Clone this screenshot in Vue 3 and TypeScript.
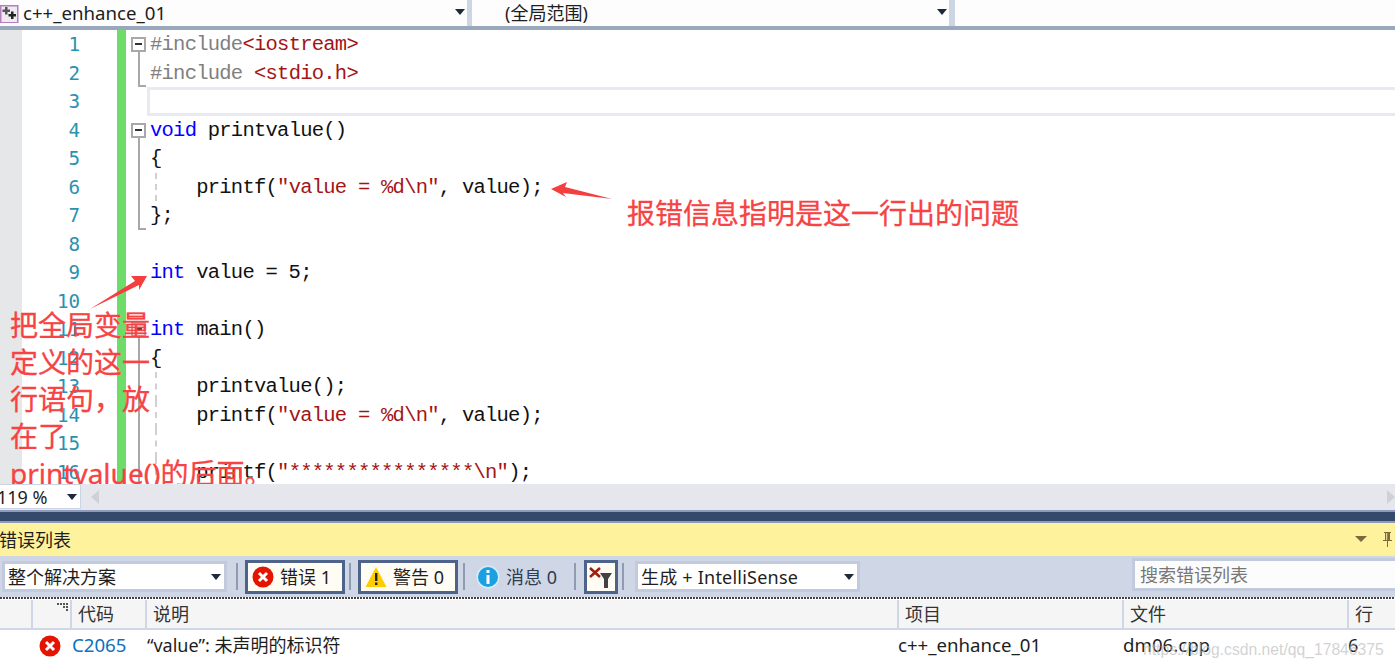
<script setup lang="ts">
type Tok = { t: string; c?: string }
type Line = { toks: Tok[]; fold?: 'box' | 'line' | 'end'; guide?: boolean; current?: boolean }

const s = (t: string): Tok => ({ t, c: 'str' })
const k = (t: string): Tok => ({ t, c: 'kw' })
const p = (t: string): Tok => ({ t, c: 'pp' })
const n = (t: string): Tok => ({ t })

const lines: Line[] = [
  { toks: [p('#include'), s('<iostream>')], fold: 'box' },
  { toks: [p('#include'), n(' '), s('<stdio.h>')], fold: 'end' },
  { toks: [], current: true },
  { toks: [k('void'), n(' printvalue()')], fold: 'box' },
  { toks: [n('{')], fold: 'line' },
  { toks: [n('    printf('), s('"value = %d\\n"'), n(', value);')], fold: 'line', guide: true },
  { toks: [n('};')], fold: 'end' },
  { toks: [] },
  { toks: [k('int'), n(' value = 5;')] },
  { toks: [] },
  { toks: [k('int'), n(' main()')], fold: 'box' },
  { toks: [n('{')], fold: 'line' },
  { toks: [n('    printvalue();')], fold: 'line', guide: true },
  { toks: [n('    printf('), s('"value = %d\\n"'), n(', value);')], fold: 'line', guide: true },
  { toks: [], fold: 'line', guide: true },
  { toks: [n('    printf('), s('"****************\\n"'), n(');')], fold: 'line', guide: true },
]

const noteLines: string[] = ['把全局变量', '定义的这一', '行语句，放', '在了', 'printvalue()的后面。']
const columns: string[] = ['', '', '代码', '说明', '项目', '文件', '行']
</script>

<template>
  <div class="page">
    <div class="navbar">
      <div class="nav-combo first">
        <svg class="proj" width="19" height="19" viewBox="0 0 19 19">
          <rect x="0.750" y="1.750" width="17" height="17" fill="#eeeaf0" stroke="#b67fc0" stroke-width="1.500" />
          <path d="M5 3v2.500H2.500v2.500H5v2.500h2.500V8H10V5.500H7.500V3z" fill="#555" />
          <path d="M11 7.500V10H8.500v2.500H11V15h2.500v-2.500H16V10h-2.500V7.500z" fill="#222" />
        </svg>
        <span class="nav-text latin">c++_enhance_01</span>
        <i class="caret nav-caret"></i>
      </div>
      <div class="nav-combo second">
        <span class="nav-text scope">(全局范围)</span>
        <i class="caret nav-caret"></i>
      </div>
      <div class="nav-combo third"></div>
    </div>

    <div class="editor">
      <div v-for="(line, i) in lines" :key="i" class="row">
        <div class="gutter"></div>
        <div class="num">{{ i + 1 }}</div>
        <div class="green"></div>
        <div class="fold" :class="line.fold">
          <i v-if="line.fold === 'box'" class="fold-box"></i>
        </div>
        <div class="code" :class="{ current: line.current, guide: line.guide }">
          <span v-for="(tok, j) in line.toks" :key="j" :class="tok.c">{{ tok.t }}</span>
        </div>
      </div>

      <svg class="arrows" width="700" height="340" viewBox="0 0 700 340">
        <polygon points="551,159 567,152 565,157 612,169 563,163 566,167" fill="#f53e3e" />
        <polygon points="147,246 131,246 135,251 90,279 139,255 139,260" fill="#f53e3e" />
      </svg>
      <div class="note note-right">报错信息指明是这一行出的问题</div>
      <div class="note note-left">
        <div v-for="t in noteLines" :key="t" class="note-line">{{ t }}</div>
      </div>
    </div>

    <div class="hscroll">
      <div class="zoom-combo"><span>119 %</span><i class="caret"></i></div>
      <i class="tri-left"></i>
      <i class="tri-right"></i>
    </div>

    <div class="splitter"></div>

    <div class="title">
      <span class="title-text">错误列表</span>
      <i class="title-caret"></i>
      <svg class="pin" width="11" height="16" viewBox="0 0 11 16">
        <path d="M2 1h7v1H8v7h2v1H1V9h2V2H2zM4.200 2v7h1V2zM5 10h1v6H5z" fill="#7a6a3f" />
      </svg>
    </div>

    <div class="toolbar">
      <div class="combo scope-combo"><span>整个解决方案</span><i class="caret"></i></div>
      <i class="sep sep-a"></i>
      <div class="btn err">
        <svg width="22" height="22" viewBox="0 0 22 22">
          <circle cx="11" cy="11" r="10.500" fill="#e51400" />
          <path d="M7 7l8 8M15 7l-8 8" stroke="#fff" stroke-width="3" />
        </svg>
        <span>错误 1</span>
      </div>
      <i class="sep sep-b"></i>
      <div class="btn warn">
        <svg width="22" height="22" viewBox="0 0 22 22">
          <path d="M11 1L21.500 21H0.500z" fill="#fc0" />
          <path d="M10 7h2.400v8H10zM10 16.500h2.400V19H10z" fill="#222" />
        </svg>
        <span>警告 0</span>
      </div>
      <i class="sep sep-c"></i>
      <div class="info">
        <svg width="24" height="24" viewBox="0 0 24 24">
          <circle cx="12" cy="12" r="11.500" fill="#d6edf8" />
          <circle cx="12" cy="12" r="10" fill="#1ba1e2" />
          <path d="M10.500 5h3v3h-3zM10.500 10h3v9h-3z" fill="#fff" />
        </svg>
        <span>消息 0</span>
      </div>
      <i class="sep sep-d"></i>
      <div class="filter">
        <svg width="24" height="24" viewBox="0 0 24 24">
          <path d="M1 3l10 9M11 3l-10 9" stroke="#a11d0e" stroke-width="2.600" />
          <path d="M11 8h12l-4 6v9h-4v-9z" fill="#424242" />
        </svg>
      </div>
      <i class="sep sep-e"></i>
      <div class="combo build-combo"><span class="spaced">生成 + IntelliSense</span><i class="caret"></i></div>
      <div class="search"><span class="search-text">搜索错误列表</span></div>
    </div>

    <div class="dots"></div>

    <div class="thead">
      <div v-for="(c, i) in columns" :key="i" class="th">
        {{ c }}
        <svg v-if="i === 1" class="grip" width="11" height="11" viewBox="0 0 11 11">
          <path d="M0 0h2v2H0zM3 0h2v2H3zM6 0h2v2H6zM9 0h2v2H9zM6 3h2v2H6zM9 3h2v2H9zM9 6h2v2H9z" fill="#555" />
        </svg>
      </div>
    </div>

    <div class="tbody">
      <div class="td"></div>
      <div class="td td-icon">
        <svg width="22" height="22" viewBox="0 0 22 22">
          <circle cx="11" cy="11" r="10.500" fill="#e51400" />
          <path d="M7 7l8 8M15 7l-8 8" stroke="#fff" stroke-width="3" />
        </svg>
      </div>
      <div class="td link latin">C2065</div>
      <div class="td desc">“value”: 未声明的标识符</div>
      <div class="td shift latin">c++_enhance_01</div>
      <div class="td shift latin">dm06.cpp</div>
      <div class="td shift">6</div>
      <div class="mark">https://blog.csdn.net/qq_17846375</div>
    </div>
  </div>
</template>

<style>
html, body { margin: 0; background: #fff; overflow: hidden; }
</style>

<style scoped>
.page {
  width: 1395px;
  height: 667px;
  overflow: hidden;
  display: flex;
  flex-direction: column;
  font-family: "Noto Sans", "Noto Sans CJK SC", sans-serif;
  color: #1e1e1e;
  font-size: 18px;
}
.latin { font-size: 18.650px; }
.spaced { letter-spacing: 0.220px; }
.navbar {
  height: 26px;
  flex: none;
  display: flex;
  background: #ccd5e2;
  border-bottom: 4px solid #9aa8bb;
}
.nav-combo {
  background: #fdfdfd;
  display: flex;
  align-items: center;
  position: relative;
  height: 26px;
}
.first { width: 467px; }
.second { width: 477px; margin-left: 5px; }
.third { flex: 1; margin-left: 6px; }
.proj { margin-right: 4px; flex: none; }
.nav-text { line-height: 26px; }
.scope { margin-left: 33px; font-size: 18px; }
.caret {
  display: block;
  width: 0;
  height: 0;
  border-left: 5.500px solid transparent;
  border-right: 5.500px solid transparent;
  border-top: 6px solid #1e2a3c;
  margin-left: auto;
}
.nav-caret { margin-right: 2px; margin-top: -3px; }

.editor {
  height: 454px;
  flex: none;
  position: relative;
  overflow: hidden;
  background: #fff;
}
.row { display: flex; height: 28.530px; }
.gutter { width: 22px; background: #e6e7e8; flex: none; }
.num {
  width: 58px;
  flex: none;
  text-align: right;
  color: #2b91af;
  font-family: "DejaVu Sans Mono", monospace;
  font-size: 19.200px;
  line-height: 28.530px;
  padding-top: 1px;
  box-sizing: border-box;
}
.green { width: 9px; margin-left: 37px; flex: none; background: #6edc69; }
.fold { width: 24px; flex: none; position: relative; }
.fold.line::before, .fold.end::before, .fold.box::before {
  content: "";
  position: absolute;
  left: 12px;
  width: 2px;
  top: 0;
  bottom: 0;
  background: #a8a8a8;
}
.fold.box::before { top: 20px; }
.fold.end::after {
  content: "";
  position: absolute;
  left: 12px;
  bottom: 0;
  width: 8px;
  height: 2px;
  background: #a8a8a8;
}
.fold-box {
  position: absolute;
  left: 5px;
  top: 7px;
  width: 11px;
  height: 11px;
  border: 2px solid #a8a8a8;
  background: #fff;
}
.fold-box::after {
  content: "";
  position: absolute;
  left: 2px;
  top: 4px;
  width: 7px;
  height: 2px;
  background: #333;
}
.code {
  flex: 1;
  position: relative;
  white-space: pre;
  font-family: "Liberation Mono", monospace;
  font-size: 20.500px;
  letter-spacing: -0.750px;
  line-height: 28.530px;
  padding-top: 1px;
  color: #111;
  box-sizing: border-box;
}
.code.current { border: 3px solid #e9e9f1; border-right: none; margin-left: -3px; }
.code.guide::before {
  content: "";
  position: absolute;
  left: 5px;
  top: 0;
  bottom: 0;
  border-left: 2px dashed #d0d0d0;
}
.kw { color: #0000ff; }
.pp { color: #808080; }
.str { color: #a31515; }
.arrows { position: absolute; left: 0; top: 0; pointer-events: none; }
.note {
  position: absolute;
  color: #f74343;
  font-size: 28px;
  white-space: nowrap;
  font-family: "Noto Sans", "Noto Sans CJK SC", sans-serif;
  -webkit-text-stroke: 0.300px #f74343;
}
.note-right { left: 627px; top: 163px; line-height: 40px; }
.note-left { left: 10px; top: 276.500px; }
.note-line { height: 37px; line-height: 37px; }

.hscroll {
  height: 26px;
  flex: none;
  background: #e6e7ed;
  display: flex;
  align-items: center;
  position: relative;
}
.zoom-combo {
  width: 81px;
  height: 25px;
  box-sizing: border-box;
  background: #fff;
  border: 1px solid #ccd3e3;
  border-left: none;
  display: flex;
  align-items: center;
  padding-right: 3px;
  margin-top: -1px;
}
.zoom-combo span { margin-left: -3px; }
.tri-left {
  width: 0;
  height: 0;
  margin-left: 10px;
  border-top: 7px solid transparent;
  border-bottom: 7px solid transparent;
  border-right: 8px solid #d0d1d6;
}
.tri-right {
  width: 0;
  height: 0;
  margin-left: auto;
  border-top: 7px solid transparent;
  border-bottom: 7px solid transparent;
  border-left: 8px solid #d0d1d6;
}
.splitter {
  height: 9px;
  flex: none;
  background: #35496a;
  border-top: 2px solid #8e9bbc;
  border-bottom: 2px solid #8e9bbc;
}
.title {
  height: 33px;
  flex: none;
  background: #fff29d;
  display: flex;
  align-items: center;
}
.title-text { margin-left: -1px; margin-top: -2px; }
.title-caret {
  width: 0;
  height: 0;
  margin-left: auto;
  margin-top: -1px;
  border-left: 6px solid transparent;
  border-right: 6px solid transparent;
  border-top: 6px solid #7a6a3f;
}
.pin { margin-left: 15px; margin-right: 2px; margin-top: -2px; }

.toolbar {
  height: 41px;
  flex: none;
  background: #cfd6e5;
  display: flex;
  align-items: center;
  padding-left: 2px;
  line-height: 24px;
}
.combo span, .btn span, .info span { margin-top: 0; }
.search-text { margin-top: 2px; }
.combo {
  width: 225px;
  height: 31px;
  box-sizing: border-box;
  background: #fff;
  border: 3px solid #c2cbde;
  display: flex;
  align-items: center;
  padding: 0 3px;
  flex: none;
}
.sep { display: block; width: 2px; height: 27px; background: #8e9bb0; flex: none; }
.sep-a { margin-left: 9px; }
.sep-b { margin-left: 4px; }
.sep-c { margin-left: 5px; }
.sep-d { margin-left: 17px; }
.sep-e { margin-left: 4px; }
.btn {
  width: 100px;
  height: 34px;
  box-sizing: border-box;
  background: #fffcf4;
  border: 3px solid #4e6389;
  display: flex;
  align-items: center;
  padding-left: 4px;
  gap: 6px;
  flex: none;
}
.err { margin-left: 7px; }
.warn { margin-left: 7px; }
.info { display: flex; align-items: center; gap: 6px; margin-left: 11px; flex: none; color: #2f3c52; }
.filter {
  width: 34px;
  height: 34px;
  box-sizing: border-box;
  background: #fffcf4;
  border: 3px solid #4e6389;
  margin-left: 8px;
  display: flex;
  align-items: center;
  justify-content: center;
  flex: none;
}
.build-combo { margin-left: 11px; }
.search {
  margin-left: 272px;
  margin-top: -5px;
  flex: 1;
  height: 33px;
  box-sizing: border-box;
  background: #fcfcfc;
  border: 3px solid #c2cbde;
  border-right: none;
  color: #777;
  display: flex;
  align-items: center;
  padding-left: 5px;
}
.dots {
  height: 3px;
  flex: none;
  background-color: #fff;
  background-image: repeating-linear-gradient(90deg, #444 0 2px, #fff 2px 3px);
  background-size: 3px 2px;
  background-repeat: repeat-x;
}
.thead {
  height: 28px;
  flex: none;
  background: #f5f5f5;
  border-bottom: 2px solid #cfd6e5;
  display: grid;
  grid-template-columns: 33px 39px 75px 752px 225px 225px 46px;
  color: #333;
}
.th {
  position: relative;
  box-sizing: border-box;
  border-right: 2px solid #cfd6e5;
  padding-left: 6px;
  line-height: 28px;
}
.th:last-child { border-right: none; }
.grip { position: absolute; right: 2px; top: 3px; }
.tbody {
  flex: 1;
  background: #fff;
  position: relative;
  display: grid;
  grid-template-columns: 33px 39px 75px 752px 225px 225px 46px;
  height: 39px;
}
.td { line-height: 30px; white-space: nowrap; overflow: hidden; }
.td-icon { display: flex; justify-content: flex-end; padding: 5px 11px 0 0; box-sizing: border-box; overflow: visible; }
.td-icon svg { display: block; }
.link { color: #0e70c0; }
.shift { margin-left: -1px; }
.mark {
  position: absolute;
  left: 1143px;
  top: 6px;
  font-family: "Liberation Sans", sans-serif;
  font-size: 15.700px;
  line-height: 28px;
  color: rgba(190, 190, 190, 0.7);
  white-space: nowrap;
}
</style>
